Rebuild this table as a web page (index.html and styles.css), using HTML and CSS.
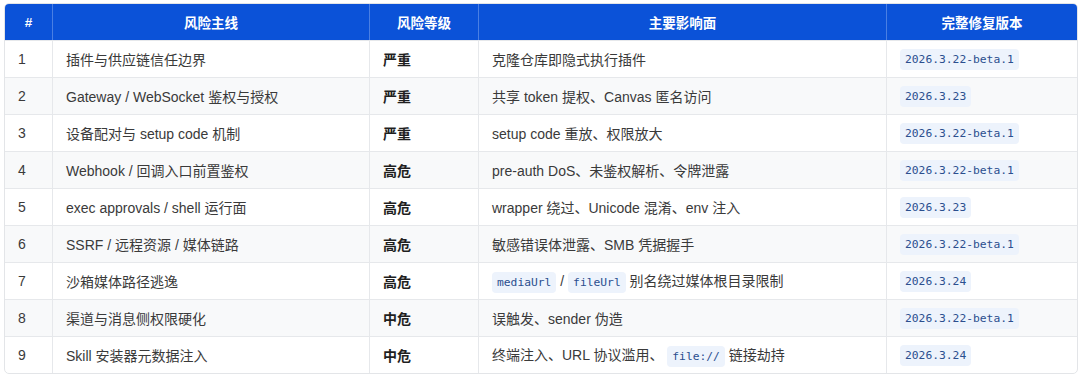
FILE: index.html
```html
<!DOCTYPE html>
<html lang="zh-CN">
<head>
<meta charset="utf-8">
<link rel="stylesheet" href="styles.css">
</head>
<body>
<div class="wrap">
<table class="risk">
  <colgroup>
    <col class="c-num"><col class="c-line"><col class="c-level"><col class="c-impact"><col class="c-ver">
  </colgroup>
  <thead>
    <tr><th>#</th><th>风险主线</th><th>风险等级</th><th>主要影响面</th><th>完整修复版本</th></tr>
  </thead>
  <tbody>
    <tr><td>1</td><td>插件与供应链信任边界</td><td class="lvl">严重</td><td>克隆仓库即隐式执行插件</td><td><code>2026.3.22-beta.1</code></td></tr>
    <tr><td>2</td><td>Gateway / WebSocket 鉴权与授权</td><td class="lvl">严重</td><td>共享 token 提权、Canvas 匿名访问</td><td><code>2026.3.23</code></td></tr>
    <tr><td>3</td><td>设备配对与 setup code 机制</td><td class="lvl">严重</td><td>setup code 重放、权限放大</td><td><code>2026.3.22-beta.1</code></td></tr>
    <tr><td>4</td><td>Webhook / 回调入口前置鉴权</td><td class="lvl">高危</td><td>pre-auth DoS、未鉴权解析、令牌泄露</td><td><code>2026.3.22-beta.1</code></td></tr>
    <tr><td>5</td><td>exec approvals / shell 运行面</td><td class="lvl">高危</td><td>wrapper 绕过、Unicode 混淆、env 注入</td><td><code>2026.3.23</code></td></tr>
    <tr><td>6</td><td>SSRF / 远程资源 / 媒体链路</td><td class="lvl">高危</td><td>敏感错误体泄露、SMB 凭据握手</td><td><code>2026.3.22-beta.1</code></td></tr>
    <tr><td>7</td><td>沙箱媒体路径逃逸</td><td class="lvl">高危</td><td><code>mediaUrl</code> / <code>fileUrl</code> 别名绕过媒体根目录限制</td><td><code>2026.3.24</code></td></tr>
    <tr><td>8</td><td>渠道与消息侧权限硬化</td><td class="lvl">中危</td><td>误触发、sender 伪造</td><td><code>2026.3.22-beta.1</code></td></tr>
    <tr><td>9</td><td>Skill 安装器元数据注入</td><td class="lvl">中危</td><td>终端注入、URL 协议滥用、 <code>file://</code> 链接劫持</td><td><code>2026.3.24</code></td></tr>
  </tbody>
</table>
</div>
</body>
</html>
```

FILE: styles.css
```css
html, body {
  margin: 0;
  padding: 0;
  background: #ffffff;
}
body {
  font-family: "Liberation Sans", "Noto Sans CJK SC", sans-serif;
  color: #333333;
}
.wrap {
  padding: 3px 4px 0 4px;
}
.risk {
  width: 1072px;
  border-collapse: separate;
  border-spacing: 0;
  border: 1px solid #e3e5e8;
  border-radius: 5px;
  overflow: hidden;
  table-layout: fixed;
}
.c-num { width: 47px; }
.c-line { width: 317px; }
.c-level { width: 109px; }
.c-impact { width: 408px; }
.c-ver { width: 191px; }

.risk th {
  background: #0b52d8;
  color: #ffffff;
  font-weight: bold;
  font-size: 13.5px;
  height: 36px;
  padding: 0;
  text-align: center;
  border-left: 1px solid #4a7fe3;
  font-family: "Liberation Sans", "Noto Sans CJK SC", sans-serif;
}
.risk th:first-child { border-left: none; }
.risk td {
  height: 36px;
  padding: 0 0 0 13px;
  font-size: 14px;
  border-top: 1px solid #e6e8eb;
  border-left: 1px solid #e6e8eb;
  vertical-align: middle;
  white-space: nowrap;
  color: #3a3a3a;
}
.risk td:first-child { border-left: none; }
.risk tbody tr:nth-child(even) td { background: #f8f9fa; }
.risk td.lvl {
  font-weight: bold;
  color: #1f1f1f;
}
code {
  font-family: "DejaVu Sans Mono", "Liberation Mono", monospace;
  font-size: 11.3px;
  color: #2b4f8f;
  background: #edf3fc;
  border-radius: 4px;
  padding: 3px 5px;
  line-height: 15px;
  display: inline-block;
}
```
